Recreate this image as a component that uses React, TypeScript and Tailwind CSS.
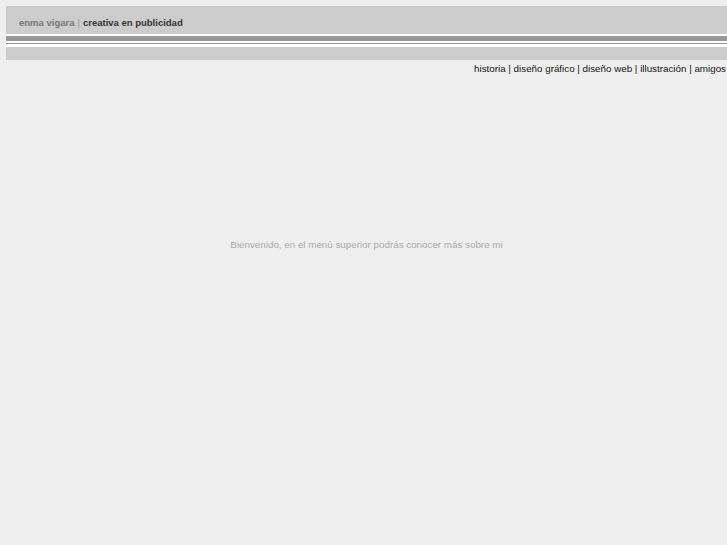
import React from 'react'

export default function App() {
    return (
        <div className="min-h-[545px] bg-[#efefef] pt-[6px] pl-[6px]" style={{ fontFamily: '"Liberation Sans", Arial, sans-serif' }}>
            <div className="h-[28px] bg-[#cccccc] flex items-center pt-[6px] pl-[13px] text-[9.5px] font-bold">
                <span className="text-[#777777]">enma vigara</span>
                <span className="text-[#999999] font-normal mx-[3px]">|</span>
                <span className="text-[#333333]">creativa en publicidad</span>
            </div>
            <div className="h-[2px] bg-white" />
            <div className="h-[5px] bg-[#999999]" />
            <div className="h-[2px] bg-white" />
            <div className="h-[1px] bg-[#999999]" />
            <div className="h-[3px] bg-white" />
            <div className="h-[13px] bg-[#cccccc]" />
            <div className="flex justify-end pt-[2px] pr-[1px] text-[9.8px] text-[#111111]">
                historia | diseño gráfico | diseño web | illustración | amigos
            </div>
            <div className="pt-[161px] text-center text-[9.8px] text-[#aaaaaa]">
                Bienvenido, en el menú superior podrás conocer más sobre mi
            </div>
        </div>
    );
}
